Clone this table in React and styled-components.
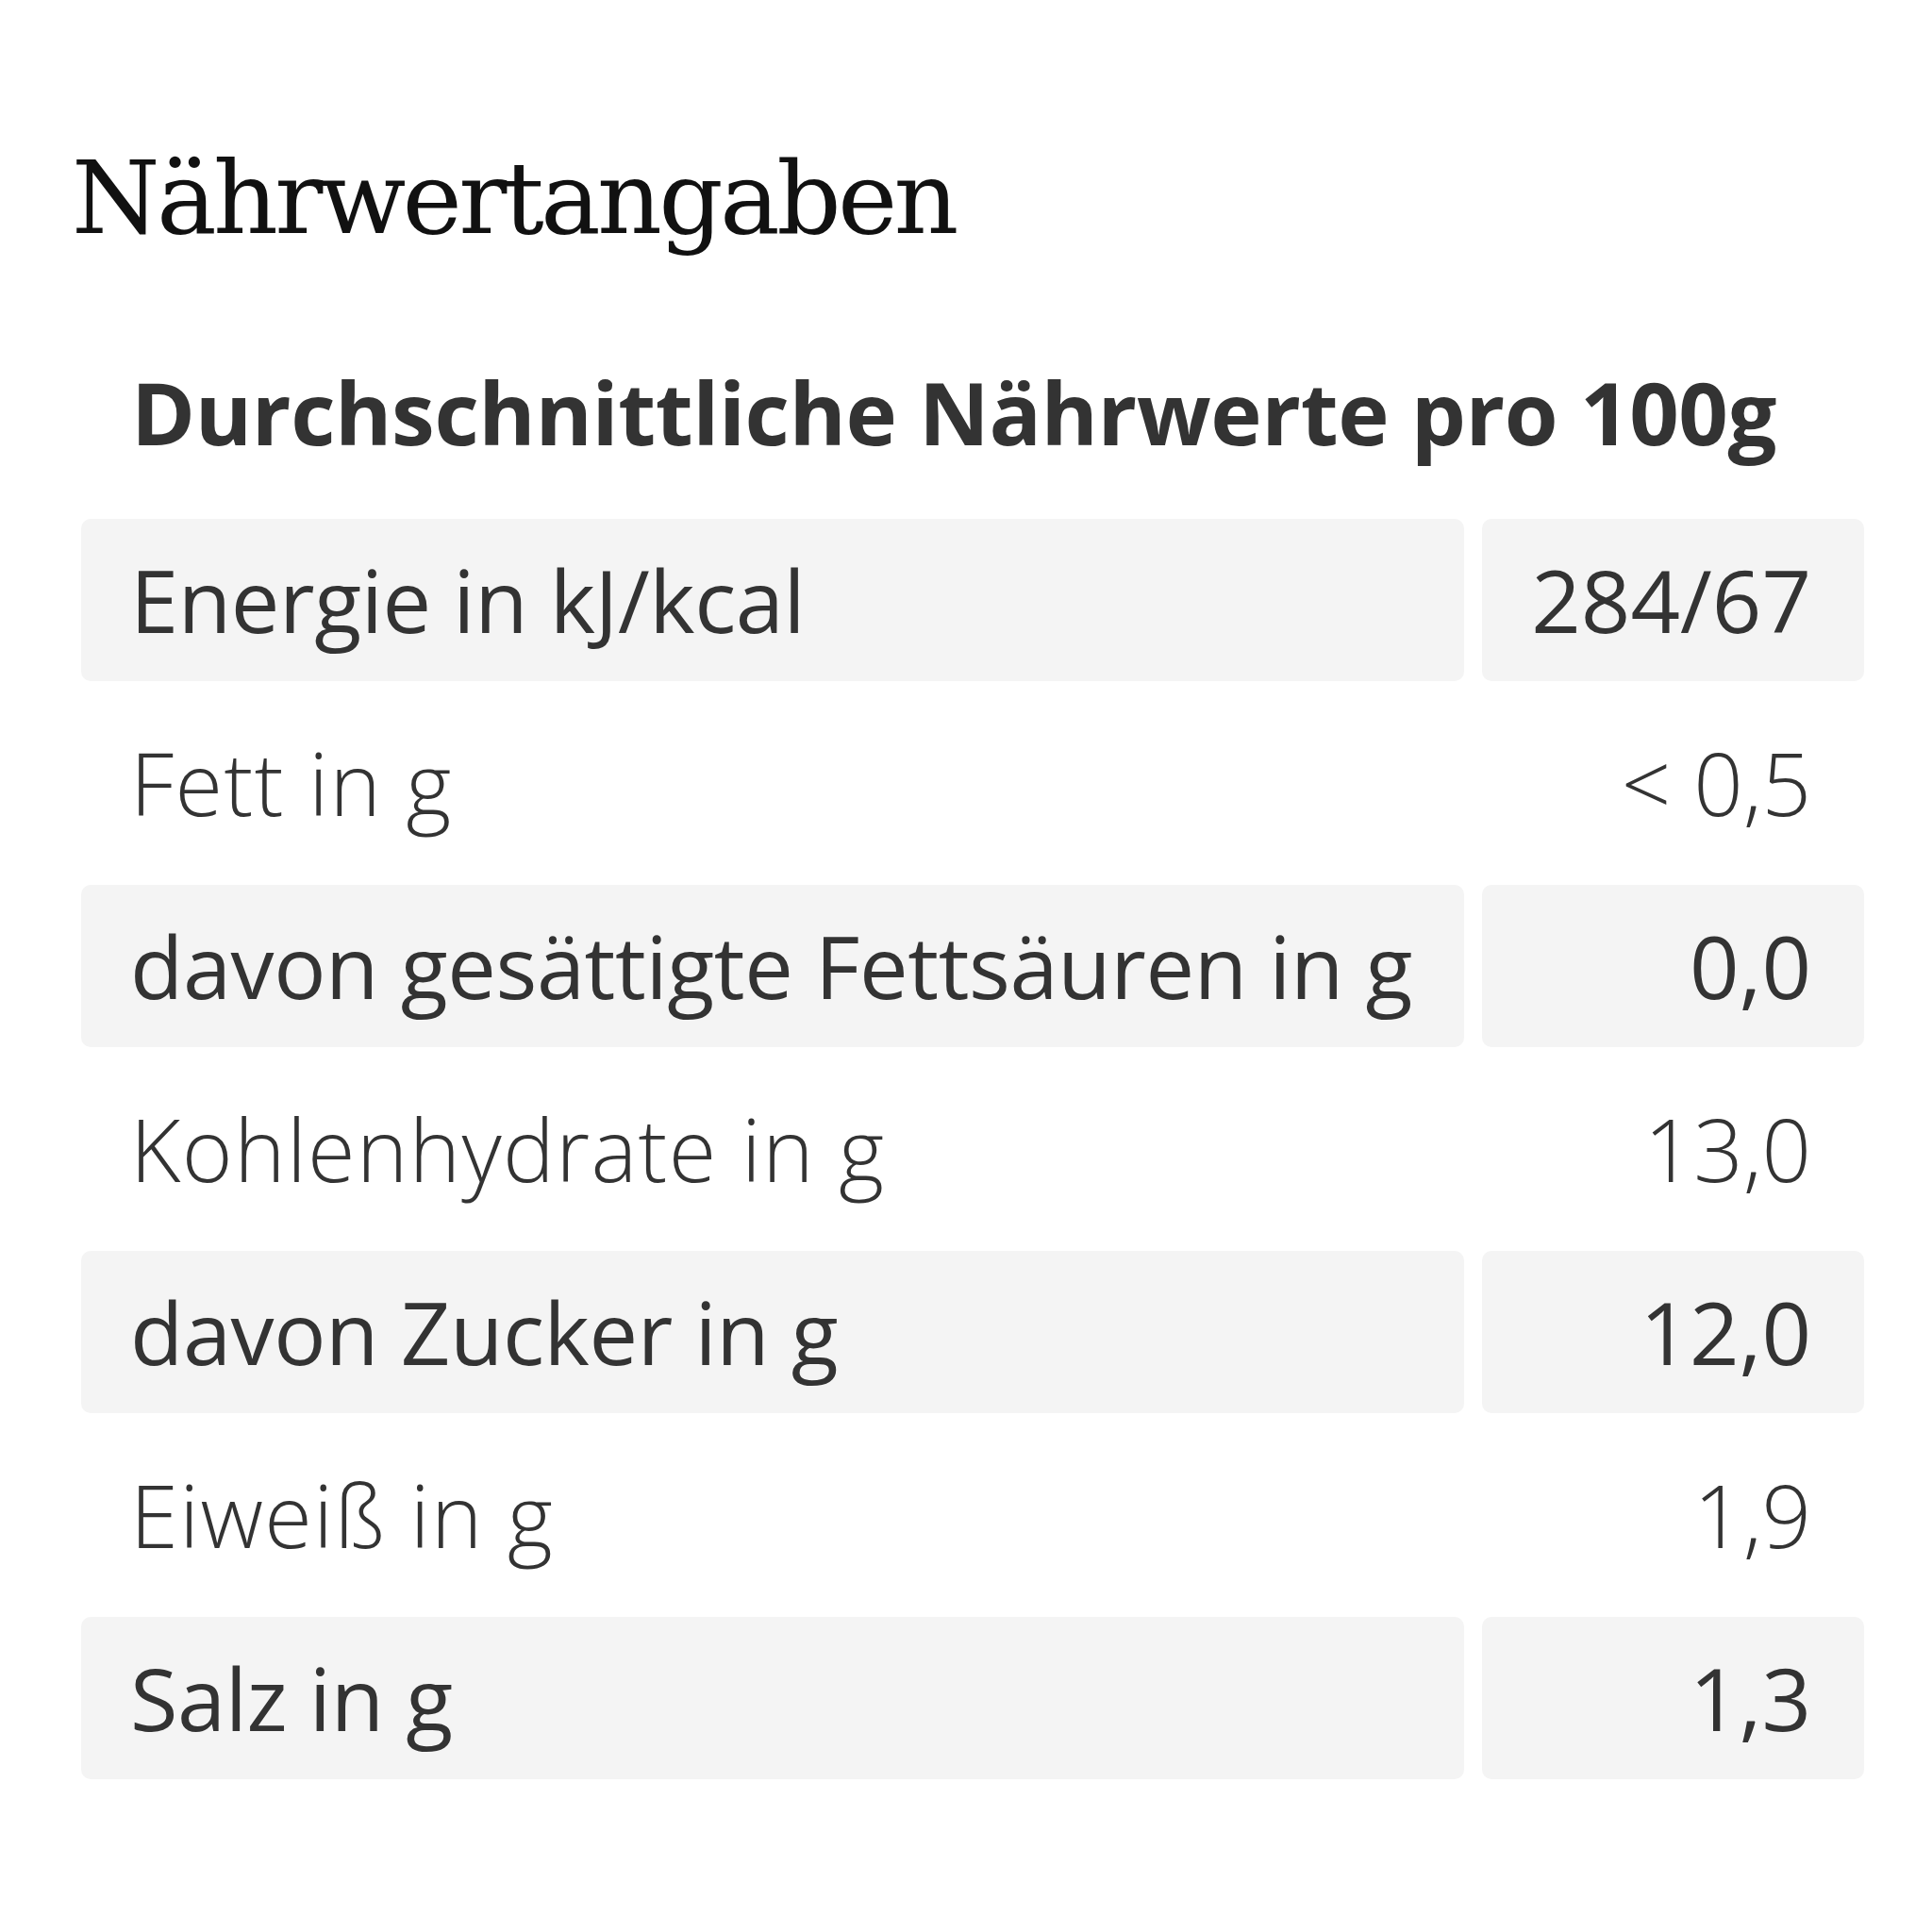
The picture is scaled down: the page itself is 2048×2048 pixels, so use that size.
import React from 'react';
import styled, { createGlobalStyle } from 'styled-components';

const GlobalStyle = createGlobalStyle`
    body {
        margin: 0;
        background: #fff;
        font-family: "Open Sans", "Liberation Sans", sans-serif;
    }
`;

const Page = styled.div`
    width: 2048px;
    padding: 157px 72px 100px 76px;
    box-sizing: border-box;
`;

const Title = styled.h2`
    margin: 0;
    font-family: "DejaVu Serif", "Liberation Serif", serif;
    font-weight: 400;
    font-size: 107px;
    line-height: 1;
    letter-spacing: -3.7px;
    color: #111;
`;

const Caption = styled.div`
    margin: 127px 0 67px 63px;
    font-size: 92px;
    font-weight: 700;
    line-height: 1;
    letter-spacing: -0.4px;
    color: #333;
`;

const Table = styled.div`
    margin-left: 10px;
    display: grid;
    grid-template-columns: 1fr 405px;
    column-gap: 19px;
    row-gap: 22px;
`;

const Cell = styled.div`
    height: 172px;
    display: flex;
    align-items: center;
    justify-content: ${props => (props.$value ? 'flex-end' : 'flex-start')};
    padding: ${props => (props.$value ? '0 56px 0 0' : '0 0 0 52px')};
    border-radius: 10px;
    background: ${props => (props.$shaded ? '#f4f4f4' : 'transparent')};
    font-size: 92px;
    line-height: 1;
    font-weight: ${props => (props.$shaded ? 400 : 300)};
    letter-spacing: ${props => (props.$value ? '0' : props.$shaded ? '-0.4px' : '1.4px')};
    color: #333;
    white-space: nowrap;
`;

const rows = [
    ['Energie in kJ/kcal', '284/67'],
    ['Fett in g', '< 0,5'],
    ['davon gesättigte Fettsäuren in g', '0,0'],
    ['Kohlenhydrate in g', '13,0'],
    ['davon Zucker in g', '12,0'],
    ['Eiweiß in g', '1,9'],
    ['Salz in g', '1,3'],
];

const App = () => {
    return (
        <Page>
            <GlobalStyle />
            <Title>Nährwertangaben</Title>
            <Caption>Durchschnittliche Nährwerte pro 100g</Caption>
            <Table>
                {rows.map(([label, value], i) => (
                    <React.Fragment key={label}>
                        <Cell $shaded={i % 2 === 0}>{label}</Cell>
                        <Cell $shaded={i % 2 === 0} $value>{value}</Cell>
                    </React.Fragment>
                ))}
            </Table>
        </Page>
    );
};

export default App;
